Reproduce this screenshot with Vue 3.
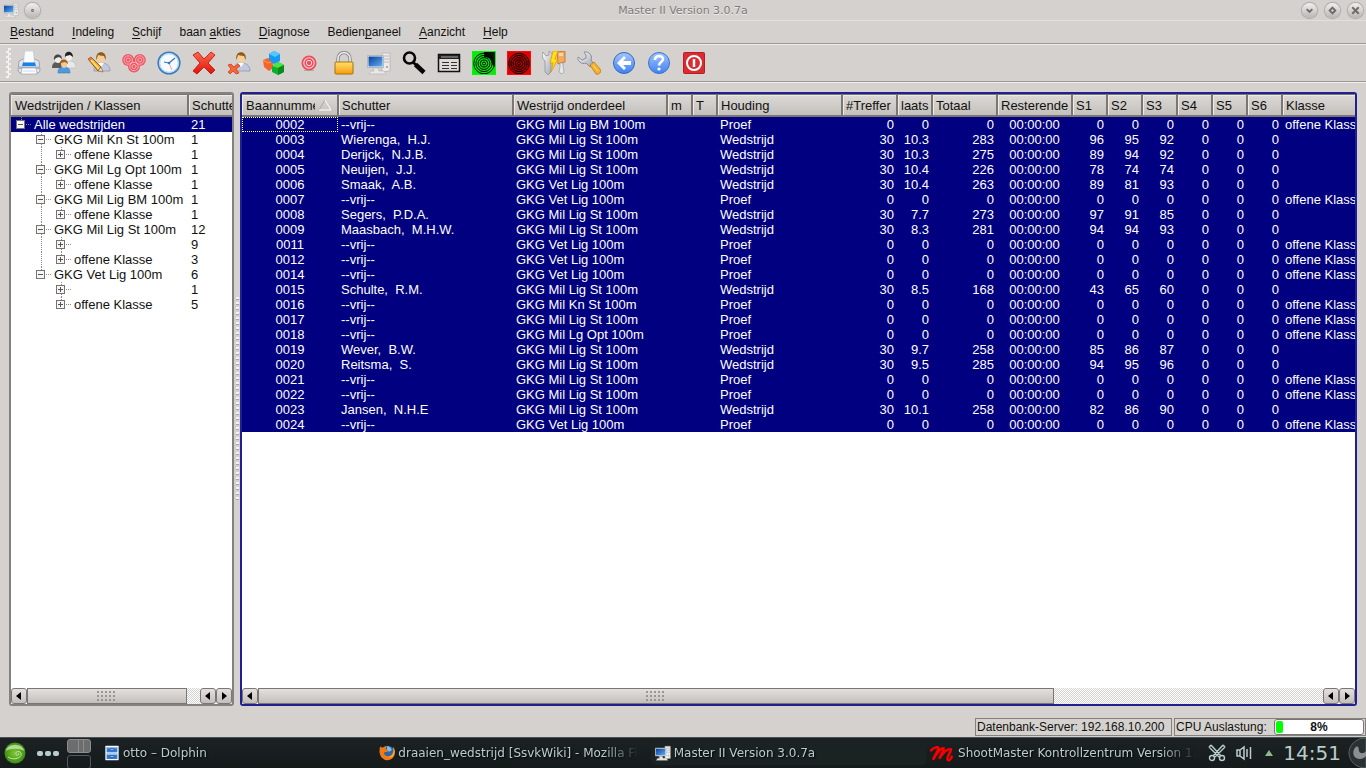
<template>
  <div class="desktop">
    <header class="titlebar">
      <svg class="ico16" viewBox="0 0 24 24"><use href="#i-computer" /></svg>
      <button class="round" aria-label="Sticky"><svg viewBox="0 0 16 16"><circle cx="8" cy="8" r=".5" /></svg></button>
      <h1>Master II Version 3.0.7a</h1>
      <div class="win-buttons">
        <button class="round" aria-label="Minimize"><svg viewBox="0 0 16 16"><path d="M5 6.5l3 3 3-3" /></svg></button>
        <button class="round" aria-label="Maximize"><svg viewBox="0 0 16 16"><path d="M8 5l3 3-3 3-3-3z" /></svg></button>
        <button class="round" aria-label="Close"><svg viewBox="0 0 16 16"><path d="M4.5 4.5l7 7M11.5 4.5l-7 7" /></svg></button>
      </div>
    </header>

    <nav class="menubar">
      <button v-for="m in menus" :key="m.join('')">{{ m[0] }}<u>{{ m[1] }}</u>{{ m[2] }}</button>
    </nav>

    <div class="toolbar">
      <span class="grip"></span>
      <button v-for="t in tools" :key="t.icon" :aria-label="t.label">
        <svg viewBox="0 0 24 24"><use :href="'#i-' + t.icon" /></svg>
      </button>
    </div>

    <main class="workspace">
      <section class="frame tree-frame">
        <div class="scroll-area">
          <table class="grid tree">
            <colgroup><col class="w177"><col></colgroup>
            <thead><tr><th>Wedstrijden / Klassen</th><th>Schutters</th></tr></thead>
            <tbody>
              <tr v-for="(n, i) in tree" :key="i" :class="{ selected: i === 0 }">
                <td>
                  <div class="node">
                    <svg v-for="l in n.level" :key="l" class="guide" viewBox="0 0 20 15">
                      <path v-if="l === 2 && n.trunk" class="dots" d="M10.5 0v15" />
                    </svg>
                    <svg class="guide" viewBox="0 0 20 15">
                      <path class="dots" d="M10.5 0v3M15 7.5h5" />
                      <path v-if="n.more" class="dots" d="M10.5 12v3" />
                      <rect x="5.5" y="3.5" width="8" height="8" fill="#f6f5f4" stroke="#777270" />
                      <path d="M7 7.5h5" stroke="#555" />
                      <path v-if="n.level === 2" d="M9.5 5v5" stroke="#555" />
                    </svg>
                    <span>{{ n.name }}</span>
                  </div>
                </td>
                <td>{{ n.count }}</td>
              </tr>
            </tbody>
          </table>
        </div>
        <div class="scrollbar">
          <button class="arrow" aria-label="Left"><svg viewBox="0 0 8 8"><path d="M6 0v8L1 4z" /></svg></button>
          <div class="trough"><div class="thumb" :style="{ width: treeThumb + '%' }"><i></i></div></div>
          <button class="arrow" aria-label="Left"><svg viewBox="0 0 8 8"><path d="M6 0v8L1 4z" /></svg></button>
          <button class="arrow" aria-label="Right"><svg viewBox="0 0 8 8"><path d="M2 0v8l5-4z" /></svg></button>
        </div>
      </section>

      <div class="splitter"><span></span></div>

      <section class="frame list-frame">
        <div class="scroll-area">
          <table class="grid lanes">
            <colgroup><col v-for="c in columns" :key="c.title" :class="c.w"></colgroup>
            <thead>
              <tr>
                <th v-for="(c, i) in columns" :key="c.title">
                  <div v-if="i === 0" class="sorted">
                    <span>{{ c.title }}</span>
                    <svg viewBox="0 0 14 12"><path d="M7 1L1 11" stroke="#aaa6a3" fill="none" /><path d="M7 1l6 10H1" stroke="#fff" fill="none" /></svg>
                  </div>
                  <template v-else>{{ c.title }}</template>
                </th>
              </tr>
            </thead>
            <tbody>
              <tr v-for="(r, ri) in rows" :key="r[0]" class="selected">
                <td v-for="(v, i) in r" :key="i" :class="[columns[i].align, { focus: ri === 0 && i === 0 }]">{{ v }}</td>
              </tr>
            </tbody>
          </table>
        </div>
        <div class="scrollbar">
          <button class="arrow" aria-label="Left"><svg viewBox="0 0 8 8"><path d="M6 0v8L1 4z" /></svg></button>
          <div class="trough"><div class="thumb" :style="{ width: listThumb + '%' }"><i></i></div></div>
          <button class="arrow" aria-label="Left"><svg viewBox="0 0 8 8"><path d="M6 0v8L1 4z" /></svg></button>
          <button class="arrow" aria-label="Right"><svg viewBox="0 0 8 8"><path d="M2 0v8l5-4z" /></svg></button>
        </div>
      </section>
    </main>

    <footer class="statusbar">
      <div class="status db">Datenbank-Server: 192.168.10.200</div>
      <div class="status cpu">
        <span>CPU Auslastung:</span>
        <div class="meter" role="progressbar" :aria-valuenow="cpu">
          <div class="fill" :style="{ width: cpu + '%' }"></div>
          <b>{{ cpu }}%</b>
        </div>
      </div>
    </footer>

    <div class="taskbar">
      <button class="start" aria-label="Start">
        <svg viewBox="0 0 24 24">
          <circle cx="12" cy="12" r="10.5" fill="url(#g-suse)" />
          <path d="M2.5 10a10 9 0 0 1 19 0c-6-3-13-3-19 0z" fill="#d7f2bd" opacity=".7" />
          <path d="M5 16c4 3 11 2 13-1.5.8-3-1-4-3-4s-3 2.5-1.5 3.5 3-1 2-2" fill="none" stroke="#c5e8a5" />
        </svg>
      </button>
      <span class="dots3"><i></i><i></i><i></i></span>
      <div class="pager"><span class="on"></span><span></span></div>
      <div class="tasks">
        <button v-for="t in tasks" :key="t.icon" :class="{ active: t.active }">
          <svg :class="t.icon" viewBox="0 0 24 24"><use :href="'#i-' + t.icon" /></svg>
          <span>{{ t.title }}</span>
        </button>
      </div>
      <div class="tray">
        <svg class="clip" viewBox="0 0 18 18" fill="none" stroke="#b9cccc" stroke-width="1.4">
          <path d="M3 1l10 11M15 1L5 12M1 3l10 10M17 3L7 13M3 1L1 3M15 1l2 2" /><circle cx="4" cy="14" r="2.5" /><circle cx="14" cy="14" r="2.5" />
        </svg>
        <svg class="vol" viewBox="0 0 16 16" fill="none" stroke="#b9cccc" stroke-width="1.5">
          <path d="M1 5h3l4-3v12l-4-3H1zM4 5v6M11 4v8M14.5 2v12" />
        </svg>
        <svg class="up" viewBox="0 0 8 6"><path d="M4 0l4 6H0z" fill="#8fb98b" /></svg>
        <time>14:51</time>
      </div>
      <button class="cashew" aria-label="Panel">
        <svg viewBox="0 0 18 30">
          <path d="M18 0C7 0 1 8 1 15s6 15 17 15z" fill="#2b3132" stroke="#5c6465" />
          <path d="M8 9c-4 3-4 11 3 12 3 .4 5-1 7-3v-5c-2 3-6 3-7 0-.5-2 0-3-1-4-.6-.6-1.3-.5-2 0z" fill="#8c9090" />
        </svg>
      </button>
    </div>

    <svg class="sprites" aria-hidden="true">
      <defs>
        <linearGradient id="g-blue" x1="0" y1="0" x2="1" y2="1"><stop offset="0" stop-color="#0a3f98" /><stop offset="1" stop-color="#5fb0f5" /></linearGradient>
        <linearGradient id="g-ball" x1="0" y1="0" x2="0" y2="1"><stop offset="0" stop-color="#a3c5fa" /><stop offset="1" stop-color="#3f82f2" /></linearGradient>
        <linearGradient id="g-gold" x1="0" y1="0" x2="0" y2="1"><stop offset="0" stop-color="#ffe36d" /><stop offset="1" stop-color="#f79a0a" /></linearGradient>
        <linearGradient id="g-red" x1="0" y1="0" x2="0" y2="1"><stop offset="0" stop-color="#ff6a4e" /><stop offset="1" stop-color="#e01108" /></linearGradient>
        <linearGradient id="g-steel" x1="0" y1="0" x2="1" y2="1"><stop offset="0" stop-color="#fff" /><stop offset="1" stop-color="#9ba1ae" /></linearGradient>
        <radialGradient id="g-suse"><stop offset="0" stop-color="#7fc935" /><stop offset="1" stop-color="#3e8d17" /></radialGradient>

        <symbol id="i-printer" viewBox="0 0 24 24">
          <path d="M2 10l4-2h12l4 2 1 10-2 2H3l-2-2z" fill="#e1e4eb" stroke="#848b9a" stroke-width=".7" />
          <path d="M7.5 0h9l1 12h-11z" fill="#fafcff" stroke="#b4bccb" stroke-width=".6" />
          <path d="M6 11.5h12l1 3.5H5z" fill="#1583ea" />
          <path d="M1 15.5h22v2.5H1z" fill="#aab1bf" /><path d="M5 17h14l1 6H4z" fill="#fff" stroke="#9ca5b6" stroke-width=".7" />
          <path d="M6 20h12" stroke="#c9d9ef" />
        </symbol>
        <symbol id="i-group" viewBox="0 0 24 24">
          <path d="M0 17c0-5 2-6 6-6s5 3 5 6z" fill="#5b5b5b" /><ellipse cx="6" cy="8" rx="3" ry="4" fill="#eee" /><path d="M2 9c-1-7 8-7 8-1L7 6 4 7z" fill="#444" />
          <path d="M12 17c0-6 2-7 6-7s6 3 6 7z" fill="#e9e9ec" stroke="#aaa" stroke-width=".5" /><ellipse cx="17" cy="6" rx="3" ry="4" fill="#f1eeec" /><path d="M13 6c-1-7 8-7 8 0L18 4l-4 1z" fill="#222" />
          <path d="M6 22c0-5 2-6 6-6s6 2 6 6z" fill="#4c9be0" stroke="#2c6ea8" stroke-width=".5" /><ellipse cx="12" cy="13" rx="3" ry="4" fill="#f4c795" /><path d="M8 13c-1-6 8-6 8 0l-3-2-4 1z" fill="#a0611a" />
        </symbol>
        <symbol id="i-person" viewBox="0 0 24 24">
          <path d="M7 20c0-6 2-8 7-8s9 2 9 8z" fill="#c1c8e0" stroke="#7e86a6" stroke-width=".6" />
          <path d="M11 12l3 4 3-4z" fill="#fff" /><ellipse cx="14" cy="7" rx="4" ry="5" fill="#f6cd9b" />
          <path d="M9.5 9C7-1.5 21-1.5 18.5 9L17 5c-3 0-5-1-6-1z" fill="#8f5c16" />
        </symbol>
        <symbol id="i-edituser" viewBox="0 0 24 24">
          <use href="#i-person" />
          <path d="M1 8l3-2 10 10-3 4z" fill="#fbac1c" stroke="#76450c" stroke-width=".8" /><path d="M3 8l9 10" stroke="#ffe48c" stroke-width="1.3" /><path d="M1 8l3-2 1.5 1.5L3 10z" fill="#d9734c" /><path d="M11 20l3-4 2 5z" fill="#efd8aa" stroke="#76450c" stroke-width=".5" />
        </symbol>
        <symbol id="i-target" viewBox="0 0 24 24">
          <circle cx="12" cy="12" r="7.5" fill="#ef4b58" /><g fill="none" stroke="#fbdcdf"><circle cx="12" cy="12" r="5.2" stroke-width="1.1" /><circle cx="12" cy="12" r="2.7" /></g><path d="M7 19.5h10" stroke="#888" opacity=".5" />
        </symbol>
        <symbol id="i-targets" viewBox="0 0 24 24">
          <g fill="#ee5562"><circle cx="6.2" cy="9" r="6" /><circle cx="17.8" cy="9" r="6" /><circle cx="12" cy="15.5" r="6" /></g>
          <g fill="none" stroke="#fbc9cd" stroke-width=".8"><circle cx="6.2" cy="9" r="4.2" /><circle cx="6.2" cy="9" r="2" /><circle cx="17.8" cy="9" r="4.2" /><circle cx="17.8" cy="9" r="2" /><circle cx="12" cy="15.5" r="4.2" /><circle cx="12" cy="15.5" r="2" /></g>
        </symbol>
        <symbol id="i-clock" viewBox="0 0 24 24">
          <circle cx="12" cy="12" r="10.8" fill="#f5faff" stroke="#397bbd" stroke-width="1.6" /><circle cx="12" cy="12" r="9.3" fill="none" stroke="#a5cdef" />
          <path d="M12 12l6-5M12 12l-5-1" stroke="#3e74b5" stroke-width="1.2" /><path d="M12 12l3 7" stroke="#f2a59c" /><circle cx="12" cy="12" r="1.3" fill="#3e74b5" />
        </symbol>
        <symbol id="i-cross" viewBox="0 0 24 24">
          <path d="M1 4l5-3 6 7 7-7 4 3-7 8 7 7-4 4-7-7-7 7-4-3 7-8z" fill="url(#g-red)" stroke="#bd1b10" stroke-width=".9" />
        </symbol>
        <symbol id="i-deluser" viewBox="0 0 24 24">
          <use href="#i-person" />
          <path d="M1 14l3-1 3 3 4-3 2 2-4 3 3 4-3 1-3-3-3 3-2-2 3-3z" fill="#fb6531" stroke="#c93712" stroke-width=".7" />
        </symbol>
        <symbol id="i-cubes" viewBox="0 0 24 24">
          <path d="M1 9l5-2 5 3v7l-4 3-5-4z" fill="#f7632b" /><path d="M1 9l5 3 5-2" fill="none" stroke="#ffa06b" />
          <path d="M12 0l6 3v7l-6 3-5-4V3z" fill="#149af0" /><path d="M7 3l5-3 6 3-5 3z" fill="#52c8ff" />
          <path d="M10 15l6-4 6 3v7l-6 3-6-3z" fill="#09b329" /><path d="M10 15l6-4 6 3-6 3z" fill="#52e04c" /><path d="M16 17l6-3v7l-6 3z" fill="#088a1c" />
        </symbol>
        <symbol id="i-lock" viewBox="0 0 24 24">
          <path d="M6 12V7.5a6 6 0 0 1 12 0V12" fill="none" stroke="#8a8a90" stroke-width="3.4" /><path d="M6 12V7.5a6 6 0 0 1 12 0V12" fill="none" stroke="#e9e9ec" stroke-width="1.6" />
          <rect x="3" y="11" width="18" height="12" rx="1" fill="url(#g-gold)" stroke="#a8720c" />
        </symbol>
        <symbol id="i-computer" viewBox="0 0 24 24">
          <path d="M15 2h8v18l-8 1z" fill="#ecebea" stroke="#b5b3b0" stroke-width=".8" /><path d="M17 5h5M17 8h5M17 11h5" stroke="#bab8b6" /><circle cx="20" cy="16" r="1" fill="#999" />
          <path d="M.5 4.5h16v12H.5z" fill="#edf1f4" stroke="#a5adb4" stroke-width=".8" /><path d="M1.5 5.5h14v10h-14z" fill="url(#g-blue)" />
          <path d="M6 17h5l1 3h5l2 3H2l2-3h3z" fill="#e9e8e6" stroke="#b5b3b0" stroke-width=".6" />
        </symbol>
        <symbol id="i-search" viewBox="0 0 24 24">
          <circle cx="7.5" cy="7" r="5.5" fill="none" stroke="#060606" stroke-width="2.6" /><path d="M11 11l3 3" stroke="#060606" stroke-width="2.5" /><path d="M13.5 13.5l8.5 8" stroke="#060606" stroke-width="4.5" />
        </symbol>
        <symbol id="i-table" viewBox="0 0 24 24">
          <rect x="1.5" y="3.5" width="21" height="17" fill="#dedbd8" stroke="#111" stroke-width="1.5" /><path d="M2 4h20v4H2z" fill="#222" /><path d="M4 6h17" stroke="#aaa" />
          <path d="M5 11.5h7M5 14.5h7M5 17.5h7M14 11.5h6M14 14.5h6M14 17.5h6" stroke="#333" />
        </symbol>
        <symbol id="i-rings" viewBox="0 0 24 24">
          <g fill="none" stroke="#000"><circle cx="12" cy="12.5" r="1.5" /><circle cx="12" cy="12.5" r="3.7" /><circle cx="12" cy="12.5" r="5.9" /><circle cx="12" cy="12.5" r="8.1" /><circle cx="12" cy="12.5" r="10.3" /></g>
        </symbol>
        <symbol id="i-green" viewBox="0 0 24 24">
          <rect x=".5" y=".5" width="23" height="23" fill="#05e90d" />
          <path d="M12 1h11v15c-2-1-3-3-4-6-1-3-4-4-7-4z" fill="#001800" /><use href="#i-rings" />
          <rect x=".5" y=".5" width="23" height="23" fill="none" stroke="#05f50e" />
        </symbol>
        <symbol id="i-red" viewBox="0 0 24 24">
          <rect x=".5" y=".5" width="23" height="23" fill="#e00000" /><circle cx="12" cy="12.5" r="10" fill="#b00000" /><use href="#i-rings" />
          <rect x=".5" y=".5" width="23" height="23" fill="none" stroke="#ff0a0a" />
        </symbol>
        <symbol id="i-tools" viewBox="0 0 24 24">
          <path d="M1 1l3 4 3-1V0c4 2 5 6 2 9v12l-3 3-3-3V10C0 8 0 4 1 1z" fill="url(#g-steel)" stroke="#858b94" stroke-width=".7" />
          <path d="M15 1l8-1v11l-7 2z" fill="#f8a85a" stroke="#a76821" stroke-width=".7" /><path d="M17 2h4v3h-4z" fill="#fcd9ae" /><path d="M18 12h3v3l1 6-2 2-3-2 1-5z" fill="#e6e8eb" stroke="#8b9098" stroke-width=".6" />
          <path d="M11 0h5l-3 8h3L9 21l2-9H8z" fill="#ffe315" stroke="#e79507" stroke-width=".8" />
        </symbol>
        <symbol id="i-wrench" viewBox="0 0 24 24">
          <path d="M7 1c5-1 9 4 7 8l3 4-4 3-4-4C5 14 0 10 1 6l4 3 4-2V4z" fill="url(#g-steel)" stroke="#777e8c" stroke-width=".8" />
          <path d="M13 14l4-3 6 7c2 3-1 6-4 5z" fill="#fbb125" stroke="#bd761b" stroke-width=".8" /><path d="M16 14l5 6" stroke="#ffe08a" />
        </symbol>
        <symbol id="i-back" viewBox="0 0 24 24">
          <circle cx="12" cy="12" r="10.5" fill="url(#g-ball)" stroke="#2e6ac4" /><path d="M12 5l2 2-3 3h8v4h-8l3 3-2 2-7-7z" fill="#fff" />
        </symbol>
        <symbol id="i-help" viewBox="0 0 24 24">
          <circle cx="12" cy="12" r="10.5" fill="url(#g-ball)" stroke="#3972d4" /><path d="M8 9c0-5 8-5 8-1 0 3-4 3-4 6.5" fill="none" stroke="#fff" stroke-width="2.6" /><circle cx="12" cy="18" r="1.6" fill="#fff" />
        </symbol>
        <symbol id="i-power" viewBox="0 0 24 24">
          <rect x="1.5" y="1.5" width="21" height="21" rx="1" fill="#d92b32" stroke="#b71c22" /><circle cx="12" cy="12" r="7" fill="none" stroke="#fff" stroke-width="2" /><path d="M12 8v8" stroke="#fff" stroke-width="2.5" />
        </symbol>
        <symbol id="i-dolphin" viewBox="0 0 24 24">
          <rect x="2" y="1" width="20" height="22" rx="1" fill="#f4f8fd" /><rect x="4" y="3" width="16" height="8" fill="#2b7ce0" /><rect x="4" y="13" width="16" height="8" fill="#2b7ce0" /><path d="M4 4h16M4 14h16" stroke="#8fc0f7" stroke-width="2" /><path d="M9 6h6v2H9zM9 16h6v2H9z" fill="#fff" stroke="#345" />
        </symbol>
        <symbol id="i-firefox" viewBox="0 0 24 24">
          <circle cx="13" cy="11" r="10" fill="#2a67a8" /><path d="M12 2c4 0 7 3 7 6l-4 2-3-3z" fill="#7cc1ee" />
          <path d="M2 2c-3 8-1 19 10 21 8 0 12-6 12-12 0-4-1-6-3-8 1 6 0 13-7 14-5 0-7-3-6-6 2-1 5 0 6-2l-4-3c0-2 1-3 2-4-3 0-5 1-6 2-2 0-3-1-4-2z" fill="#f17a16" /><path d="M21 3c3 6 1 14-7 15 7 3 12-8 7-15z" fill="#ffd13a" />
        </symbol>
        <symbol id="i-shoot" viewBox="0 0 24 16">
          <path d="M1 5c3-3 7-4 7-2 0 3-4 7-5 11 3-5 6-11 10-11 1 2-3 6-4 10 3-5 7-10 11-9 1 2-5 8-3 10 1 1 3 0 4-3" fill="none" stroke="#f60000" stroke-width="2.4" stroke-linecap="round" />
        </symbol>
      </defs>
    </svg>
  </div>
</template>

<script setup>
import { ref } from 'vue'

const treeThumb = ref(92.5)
const listThumb = ref(74.7)
const cpu = ref(8)

// text before, accelerator, text after
const menus = [
  ['', 'B', 'estand'], ['', 'I', 'ndeling'], ['', 'S', 'chijf'], ['baan ', 'a', 'kties'],
  ['', 'D', 'iagnose'], ['Bedien', 'p', 'aneel'], ['', 'A', 'anzicht'], ['', 'H', 'elp'],
]

const tools = [
  { icon: 'printer', label: 'Print' }, { icon: 'group', label: 'Schutters' },
  { icon: 'edituser', label: 'Schutter wijzigen' }, { icon: 'targets', label: 'Schijven' },
  { icon: 'clock', label: 'Tijd' }, { icon: 'cross', label: 'Verwijderen' },
  { icon: 'deluser', label: 'Schutter verwijderen' }, { icon: 'cubes', label: 'Onderdelen' },
  { icon: 'target', label: 'Schijf' }, { icon: 'lock', label: 'Blokkeren' },
  { icon: 'computer', label: 'Computer' }, { icon: 'search', label: 'Zoeken' },
  { icon: 'table', label: 'Tabel' }, { icon: 'green', label: 'Start' },
  { icon: 'red', label: 'Stop' }, { icon: 'tools', label: 'Diagnose' },
  { icon: 'wrench', label: 'Instellingen' }, { icon: 'back', label: 'Terug' },
  { icon: 'help', label: 'Help' }, { icon: 'power', label: 'Afsluiten' },
]

// trunk: the level 1 line runs on past this row, more: a sibling follows
const tree = [
  { level: 0, name: 'Alle wedstrijden', count: 21 },
  { level: 1, name: 'GKG Mil Kn St 100m', count: 1, more: true },
  { level: 2, name: 'offene Klasse', count: 1, trunk: true },
  { level: 1, name: 'GKG Mil Lg Opt 100m', count: 1, more: true },
  { level: 2, name: 'offene Klasse', count: 1, trunk: true },
  { level: 1, name: 'GKG Mil Lig BM 100m', count: 1, more: true },
  { level: 2, name: 'offene Klasse', count: 1, trunk: true },
  { level: 1, name: 'GKG Mil Lig St 100m', count: 12, more: true },
  { level: 2, name: '', count: 9, trunk: true, more: true },
  { level: 2, name: 'offene Klasse', count: 3, trunk: true },
  { level: 1, name: 'GKG Vet Lig 100m', count: 6 },
  { level: 2, name: '', count: 1, more: true },
  { level: 2, name: 'offene Klasse', count: 5 },
]

const columns = [
  { title: 'Baannummer', w: 'w96', align: 'center' },
  { title: 'Schutter', w: 'w175' },
  { title: 'Westrijd onderdeel', w: 'w154' },
  { title: 'm', w: 'w25' },
  { title: 'T', w: 'w25' },
  { title: 'Houding', w: 'w125' },
  { title: '#Treffer', w: 'w55', align: 'right' },
  { title: 'laats', w: 'w35', align: 'right' },
  { title: 'Totaal', w: 'w65', align: 'right' },
  { title: 'Resterende', w: 'w75', align: 'center' },
  { title: 'S1', w: 'w35', align: 'right' },
  { title: 'S2', w: 'w35', align: 'right' },
  { title: 'S3', w: 'w35', align: 'right' },
  { title: 'S4', w: 'w35', align: 'right' },
  { title: 'S5', w: 'w35', align: 'right' },
  { title: 'S6', w: 'w35', align: 'right' },
  { title: 'Klasse', w: '' },
]

function free(nr, event) {
  return [nr, '--vrij--', 'GKG ' + event, '', '', 'Proef', 0, 0, 0, '00:00:00', 0, 0, 0, 0, 0, 0, 'offene Klasse']
}

function match(nr, name, event, last, total, s1, s2, s3) {
  return [nr, name, 'GKG ' + event, '', '', 'Wedstrijd', 30, last, total, '00:00:00', s1, s2, s3, 0, 0, 0, '']
}

const rows = [
  free('0002', 'Mil Lig BM 100m'),
  match('0003', 'Wierenga,  H.J.', 'Mil Lig St 100m', 10.3, 283, 96, 95, 92),
  match('0004', 'Derijck,  N.J.B.', 'Mil Lig St 100m', 10.3, 275, 89, 94, 92),
  match('0005', 'Neuijen,  J.J.', 'Mil Lig St 100m', 10.4, 226, 78, 74, 74),
  match('0006', 'Smaak,  A.B.', 'Vet Lig 100m', 10.4, 263, 89, 81, 93),
  free('0007', 'Vet Lig 100m'),
  match('0008', 'Segers,  P.D.A.', 'Mil Lig St 100m', 7.7, 273, 97, 91, 85),
  match('0009', 'Maasbach,  M.H.W.', 'Mil Lig St 100m', 8.3, 281, 94, 94, 93),
  free('0011', 'Vet Lig 100m'),
  free('0012', 'Vet Lig 100m'),
  free('0014', 'Vet Lig 100m'),
  match('0015', 'Schulte,  R.M.', 'Mil Lig St 100m', 8.5, 168, 43, 65, 60),
  free('0016', 'Mil Kn St 100m'),
  free('0017', 'Mil Lig St 100m'),
  free('0018', 'Mil Lg Opt 100m'),
  match('0019', 'Wever,  B.W.', 'Mil Lig St 100m', 9.7, 258, 85, 86, 87),
  match('0020', 'Reitsma,  S.', 'Mil Lig St 100m', 9.5, 285, 94, 95, 96),
  free('0021', 'Mil Lig St 100m'),
  free('0022', 'Mil Lig St 100m'),
  match('0023', 'Jansen,  N.H.E', 'Mil Lig St 100m', 10.1, 258, 82, 86, 90),
  free('0024', 'Vet Lig 100m'),
]

const tasks = [
  { icon: 'dolphin', title: 'otto – Dolphin' },
  { icon: 'firefox', title: 'draaien_wedstrijd [SsvkWiki] - Mozilla Firefox' },
  { icon: 'computer', title: 'Master II Version 3.0.7a', active: true },
  { icon: 'shoot', title: 'ShootMaster Kontrollzentrum Version 1.0' },
]
</script>

<style>
body { margin: 0; background: #d5d1ce; }
</style>

<style scoped>
.desktop { height: 100vh; display: flex; flex-direction: column; background: #d5d1ce; color: #111; font-family: "Liberation Sans", sans-serif; font-size: 13px; overflow: hidden; }
button { font: inherit; color: inherit; border: 0; padding: 0; margin: 0; background: none; }
svg { display: block; flex: none; }
.sprites { position: absolute; width: 0; height: 0; }

.titlebar { display: flex; align-items: center; height: 20px; padding: 0 3px; border-bottom: 1px solid #e2dfdd; }
.titlebar h1 { flex: 1; margin: 0; padding-left: 24px; text-align: center; font: 11px "DejaVu Sans", sans-serif; color: #7d7a78; text-shadow: 0 1px #efedec; }
.ico16 { width: 16px; height: 16px; }
.round { width: 15px; height: 15px; border-radius: 50%; background: linear-gradient(#f1efee, #b9b6b3); box-shadow: 0 0 1px 1px #aaa6a3; }
.round svg { width: 15px; height: 15px; fill: none; stroke: #6d6a67; stroke-width: 2px; }
.ico16 + .round { margin-left: 6px; }
.win-buttons { display: flex; gap: 8px; }

.menubar { display: flex; height: 22px; padding: 0 1px; border-bottom: 1px solid #9c9895; font-size: 12px; }
.menubar button { padding: 0 9px; }
.menubar u { text-underline-offset: 2px; }
.toolbar { display: flex; align-items: center; height: 36px; padding-left: 6px; border-top: 1px solid #f0eeec; border-bottom: 1px solid #9c9895; box-shadow: 0 1px #f0eeec; }
.toolbar button { width: 35px; height: 32px; display: flex; align-items: center; justify-content: center; }
.toolbar svg { width: 24px; height: 24px; }
.grip { width: 5px; height: 30px; background: conic-gradient(#f4f2f1 25%, transparent 0 50%, #f4f2f1 0 75%, transparent 0) 0 0 / 5px 5px; }

.workspace { flex: 1; min-height: 0; display: flex; padding: 10px 9px 12px; }
.frame { display: flex; flex-direction: column; box-sizing: border-box; border: 2px solid #85817e; border-radius: 3px; background: #fff; overflow: hidden; }
.tree-frame { width: 225px; flex: none; }
.list-frame { flex: 1; min-width: 0; border-color: #20208f; }
.splitter { width: 6px; flex: none; display: flex; align-items: center; justify-content: center; }
.splitter span { width: 3px; height: 204px; background: linear-gradient(#f4f2f1 2px, #a9a5a2 2px 3px, transparent 3px) 0 0 / 3px 5px; }
.scroll-area { flex: 1; min-height: 0; overflow: hidden; }

.grid { width: 100%; table-layout: fixed; border-collapse: separate; border-spacing: 0; line-height: 15px; }
.grid th { box-sizing: border-box; height: 23px; padding: 0 0 0 3px; text-align: left; font-weight: normal; white-space: nowrap; overflow: hidden; border: solid #7b7674; border-width: 1px 1px 2px; background: linear-gradient(#dbd8d5, #c4c1bd); box-shadow: inset 1px 1px #edebea; }
.grid th:first-child { border-left: 0; padding-left: 4px; }
.grid th:last-child { border-right: 0; }
.grid td { height: 15px; padding: 0 3px; white-space: pre; overflow: hidden; }
.lanes td:last-child { padding-right: 0; }
.selected td { background: #000080; color: #fff; }
.right { text-align: right; }
.center { text-align: center; }
.grid .focus { outline: 1px dotted #fff; outline-offset: -1px; }
.tree td:first-child { padding: 0; }
.node { display: flex; height: 15px; }
.node span { padding-left: 3px; }
.guide { width: 20px; height: 15px; fill: none; }
.dots { stroke: #8d8987; stroke-dasharray: 1 1; }
.sorted { display: flex; align-items: center; padding-right: 5px; }
.sorted span { flex: 1; min-width: 0; overflow: hidden; }
.sorted svg { width: 14px; height: 12px; margin-left: 3px; }
.w177 { width: 177px; }
.w175 { width: 175px; }
.w154 { width: 154px; }
.w125 { width: 125px; }
.w96 { width: 96px; }
.w75 { width: 75px; }
.w65 { width: 65px; }
.w55 { width: 55px; }
.w35 { width: 35px; }
.w25 { width: 25px; }

.scrollbar { display: flex; height: 16px; flex: none; }
.arrow, .thumb { box-sizing: border-box; border: 1px solid #7b7674; background: linear-gradient(#e3e0de, #c2bfbb); }
.arrow { width: 16px; display: flex; align-items: center; justify-content: center; border-radius: 3px; }
.arrow svg { width: 8px; height: 8px; }
.trough { flex: 1; background: conic-gradient(#d5d1ce 25%, #fff 0 50%, #d5d1ce 0 75%, #fff 0) 0 0 / 2px 2px; }
.thumb { height: 16px; display: flex; align-items: center; justify-content: center; }
.thumb i { width: 20px; height: 10px; background: radial-gradient(circle at 1px 1px, #999592 1px, transparent 1px) 0 0 / 4px 4px; }

.statusbar { display: flex; justify-content: flex-end; gap: 2px; height: 18px; padding-bottom: 1px; font-size: 12px; }
.status { box-sizing: border-box; border: 1px solid #85817e; padding: 0 1px; line-height: 16px; white-space: nowrap; }
.db { width: 197px; }
.cpu { width: 192px; display: flex; align-items: center; justify-content: space-between; }
.meter { position: relative; box-sizing: border-box; width: 90px; height: 16px; padding: 1px; border: 1px solid #7b7674; border-radius: 3px; background: #fff; }
.fill { height: 12px; border-radius: 2px; background: #0f0; }
.meter b { position: absolute; inset: 0; line-height: 14px; text-align: center; }

.taskbar { display: flex; align-items: center; height: 30px; border-top: 1px solid #4a5152; background: linear-gradient(#1c2223, #151a1b); color: #b9cccc; font: 12px "DejaVu Sans", sans-serif; }
.start { margin-left: 3px; }
.start svg { width: 24px; height: 24px; }
.dots3 { display: flex; gap: 2px; margin-left: 10px; }
.dots3 i { width: 6px; height: 5px; border-radius: 2px; background: #b9cccc; }
.pager { display: flex; flex-direction: column; gap: 2px; margin: 2px 0 0 8px; }
.pager span { box-sizing: border-box; width: 24px; height: 14px; border: 1px solid #4d5a5e; border-radius: 3px; }
.pager .on { border-color: #8b8e8e; background: linear-gradient(90deg, transparent 10px, #8b8e8e 10px 11px, transparent 11px 15px, #8b8e8e 15px 16px, transparent 16px) #6c6e6e; }
.tasks { flex: 1; min-width: 0; display: grid; grid-template-columns: repeat(4, minmax(0, 1fr)); margin-left: 9px; }
.tasks button { min-width: 0; height: 24px; display: flex; align-items: center; gap: 3px; box-sizing: border-box; padding: 0 12px 0 4px; border-radius: 3px; text-shadow: 1px 1px 2px #000; }
.tasks button:last-child { padding-right: 4px; }
.tasks .active { background: #1b2222; }
.tasks svg { width: 16px; height: 16px; }
.tasks .shoot { width: 25px; height: 25px; }
.tasks span { flex: 1; min-width: 0; text-align: left; white-space: nowrap; overflow: hidden; mask-image: linear-gradient(90deg, #000 calc(100% - 36px), transparent); }
.tray { display: flex; align-items: center; gap: 10px; padding-left: 7px; }
.clip { width: 18px; height: 18px; }
.vol { width: 16px; height: 16px; }
.up { width: 8px; height: 6px; margin-left: 3px; }
.tray time { font-size: 20px; }
.cashew { margin-left: 7px; }
.cashew svg { width: 18px; height: 30px; }
</style>
